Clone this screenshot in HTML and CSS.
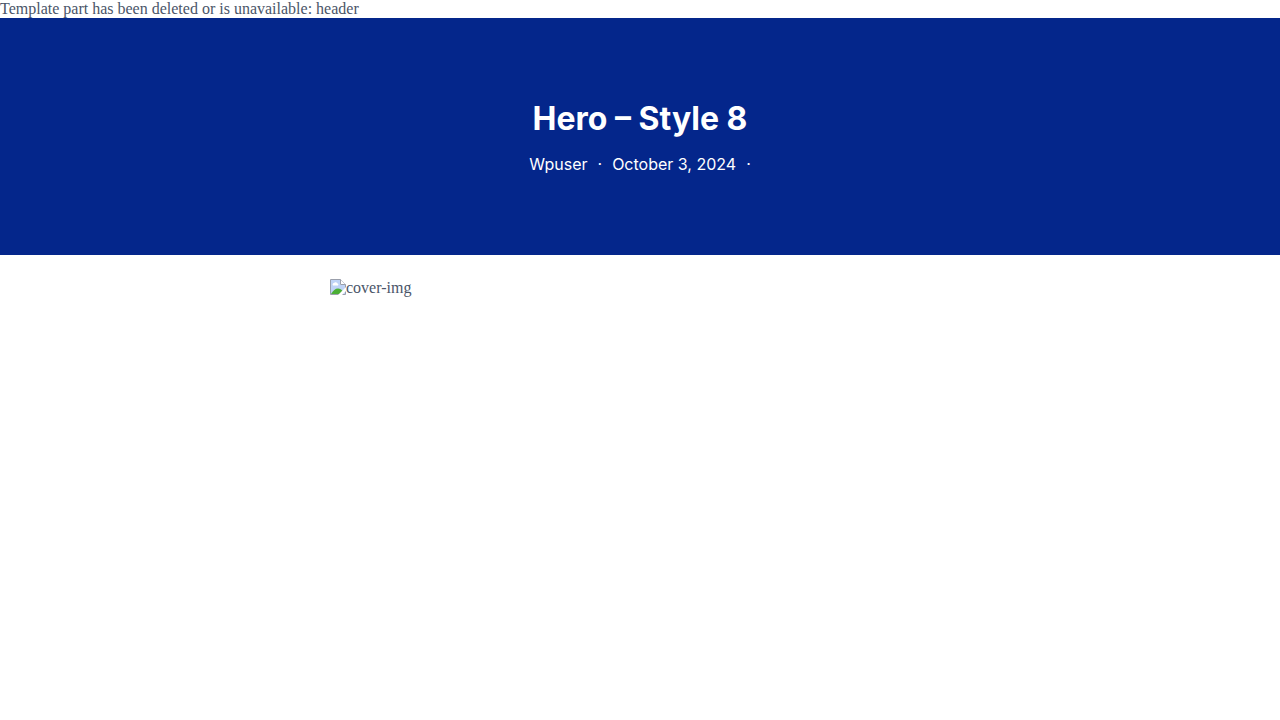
FILE: index.html
```html
<!DOCTYPE html>
<html lang="en-US">
<head>
  <meta charset="UTF-8">
  <meta name="viewport" content="width=device-width, initial-scale=1.0">
  <title>Hero – Style 8</title>
  <link rel="stylesheet" href="styles.css">
</head>
<body>
  <header>Template part has been deleted or is unavailable: header</header>
  <main>
    <section class="post-hero">
      <h1 class="post-title">Hero – Style 8</h1>
      <div class="post-meta">
        <span>Wpuser</span>
        <span>·</span>
        <time datetime="2024-10-03">October 3, 2024</time>
        <span>·</span>
      </div>
    </section>
    <div class="post-content">
      <figure class="cover">
        <svg class="cover-icon" width="16" height="16" viewBox="0 0 16 16" aria-hidden="true">
          <path d="M0.5 0.5H10.5L15.5 5.5V15.5H0.5Z" fill="#fff" stroke="#9a9fab"/>
          <path d="M1 1H10V6H15V15H1Z" fill="#bfd3f6"/>
          <path d="M3 6.5a1.5 1.5 0 0 1 1-2.5 2 2 0 0 1 3.5 0.5 1.2 1.2 0 0 1 0.5 2Z" fill="#fff"/>
          <path d="M1 15C3 11.5 5.5 9.5 8 9.5C10 9.5 11.5 10.5 12.5 12L10 15Z" fill="#4caf35"/>
          <path d="M10.5 0.5V5.5H15.5" fill="#fff" stroke="#9a9fab"/>
          <path d="M16 8L8 16H12L16 12Z" fill="#fff"/>
        </svg>
        <span>cover-img</span>
      </figure>
    </div>
  </main>
</body>
</html>
```
FILE: styles.css
```css
* {
  box-sizing: border-box;
}
body {
  margin: 0;
  background: #fff;
  color: #4a5568;
  font-family: "Liberation Serif", "Times New Roman", serif;
  font-size: 16px;
  line-height: 18px;
}
/* Hero */
.post-hero {
  display: flex;
  flex-direction: column;
  align-items: center;
  gap: 14px;
  padding: 80px 20px;
  background: #04268b;
  color: #fff;
  font-family: Inter, sans-serif;
}
.post-title {
  margin: 0;
  font-size: 32px;
  font-weight: 700;
  line-height: 42px;
  text-align: center;
}
.post-meta {
  display: flex;
  flex-wrap: wrap;
  justify-content: center;
  gap: 10px;
  line-height: 21px;
}
/* Content */
.post-content {
  max-width: 620px;
  margin: 24px auto;
}
.cover {
  display: flex;
  margin: 0;
}
.cover-icon {
  flex: none;
}
```
